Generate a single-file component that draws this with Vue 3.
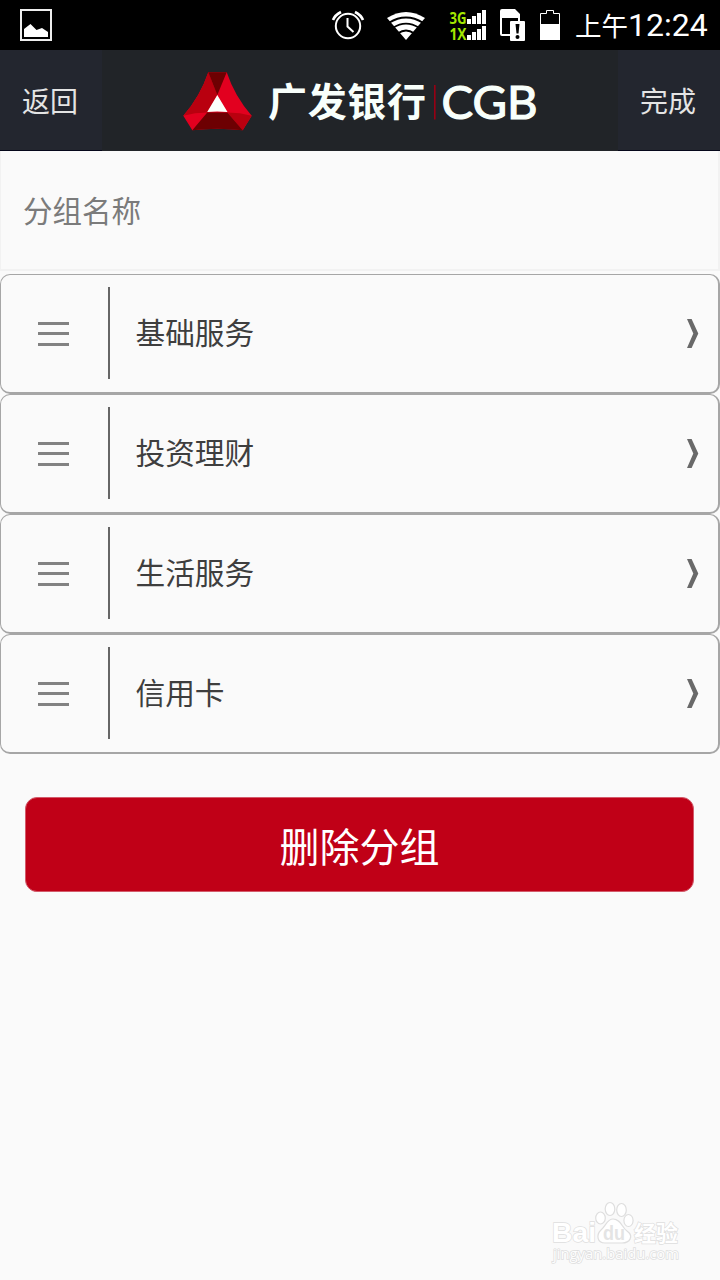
<script setup>
import { ref } from 'vue'

const groups = ref([
  { id: 1, name: '基础服务' },
  { id: 2, name: '投资理财' },
  { id: 3, name: '生活服务' },
  { id: 4, name: '信用卡' },
])

const groupName = ref('')

function removeItem() {
  groupName.value = ''
  groups.value = []
}
</script>

<template>
  <div class="page">
    <div class="status">
      <svg class="pic" width="32" height="32" viewBox="0 0 32 32">
        <rect x="1" y="1" width="30" height="30" fill="none" stroke="#eee" stroke-width="2" />
        <path d="M4 28V20L10.500 15L16.500 21L22 19L28 23V28Z" fill="#fff" />
      </svg>

      <svg class="alarm" width="34" height="32" viewBox="331 9 34 32" fill="none" stroke="#fff">
        <circle cx="348" cy="26" r="12.200" stroke-width="2" />
        <path d="M347.500 18V26.500L353.500 32" stroke-width="2" />
        <path d="M333 20Q335 15 341 12M363 20Q361 15 355 12" stroke-width="2.600" />
      </svg>

      <svg class="wifi" width="38" height="28" viewBox="387 12 38 28">
        <path d="M387 18Q406 6 425 18L406 40Z" fill="#fff" />
        <path
          d="M389 22.800Q406 12.200 423 22.800M393 27.800Q406 19.400 419 27.800M398 33.300Q406 27.700 414 33.300"
          fill="none" stroke="#000" stroke-width="1.900"
        />
      </svg>

      <svg class="signal" width="37" height="32" viewBox="449 10 37 32">
        <g fill="#a4e800" font-family="'Open Sans', sans-serif" font-weight="700" font-size="15.500">
          <text x="449.500" y="24" textLength="17" lengthAdjust="spacingAndGlyphs">3G</text>
          <text x="449.500" y="40" textLength="17" lengthAdjust="spacingAndGlyphs">1X</text>
        </g>
        <path
          d="M467 19h4v5h-4zM472 16h4v8h-4zM477 13h4v11h-4zM482 10h4v14h-4zM467 35h4v5h-4zM472 32h4v8h-4zM477 29h4v11h-4zM482 26h4v14h-4z"
          fill="#fff"
        />
      </svg>

      <svg class="sim" width="25" height="32" viewBox="500 9 25 32">
        <path d="M500 11Q500 9 502 9H515L520 14V21H510V36H502Q500 36 500 34Z" fill="#fff" />
        <path d="M502 18H518V21H510V34H502Z" fill="#000" />
        <rect x="510" y="21" width="15" height="20" rx="1" fill="#fff" />
        <path d="M515.500 24H519.500L518.500 33.500H516.500Z" fill="#000" />
        <circle cx="517.500" cy="37" r="2" fill="#000" />
      </svg>

      <svg class="battery" width="20" height="30" viewBox="540 10 20 30">
        <path d="M540.500 39.500V13.500H546.500V10.500H553.500V13.500H559.500V39.500Z" fill="none" stroke="#fff" />
        <rect x="540" y="24" width="20" height="16" fill="#fff" />
      </svg>

      <div class="time"><span class="noon">上午</span><span>12:24</span></div>
    </div>

    <div class="header">
      <div class="nav back">返回</div>
      <svg class="logo" width="354" height="60" viewBox="183 72 354 60">
        <path d="M208.300 72.300H226.700Q235 97 251.700 115.700L242.700 130.300Q217 127 192.300 130.300L183.300 115.700Q200 97 208.300 72.300Z" fill="#e2001f" />
        <path d="M208.300 72.300L217.300 95L207.300 112.500Q195 112.500 183.300 115.700Q200 97 208.300 72.300Z" fill="#b9000f" />
        <path d="M208.300 72.300H226.700L217.300 95Z" fill="#6d0002" />
        <path d="M227.300 112.500Q240 112.500 251.700 115.700L242.700 130.300Z" fill="#b9000f" />
        <path d="M207.300 112.500H227.300L242.700 130.300Q217 127 192.300 130.300Z" fill="#6d0002" />
        <path d="M217.300 95L227.500 112Q217 111 207.200 112Z" fill="#fafffb" />
        <text class="logo-cn" x="268" y="116" textLength="158">广发银行</text>
        <rect x="434" y="85" width="1.600" height="34.500" fill="#970014" />
        <text class="logo-en" x="441.500" y="118.500" textLength="96" lengthAdjust="spacingAndGlyphs">CGB</text>
      </svg>
      <div class="nav done">完成</div>
    </div>

    <input v-model="groupName" class="name" placeholder="分组名称">

    <div class="list">
      <div v-for="item in groups" :key="item.id" class="row">
        <div class="handle">
          <i></i>
          <i></i>
          <i></i>
        </div>
        <div class="line"></div>
        <div class="text">{{ item.name }}</div>
        <svg class="arrow" width="12" height="30" viewBox="0 0 12 30">
          <path d="M0 0H4.600L11.300 14.500L4.600 29H0L6.300 14.500Z" fill="#696969" />
        </svg>
      </div>
    </div>

    <button class="delete" @click="removeItem">删除分组</button>

    <svg class="mark" width="140" height="66" viewBox="546 1200 140 66">
      <g fill="#fff" stroke="#dedede" stroke-width="1.200">
        <ellipse cx="600.500" cy="1218" rx="4.800" ry="6" />
        <ellipse cx="610" cy="1209" rx="4.800" ry="6.500" />
        <ellipse cx="621.500" cy="1210" rx="4.800" ry="6.500" />
        <ellipse cx="628.500" cy="1220.500" rx="4.600" ry="6" />
        <path d="M613 1219C621 1219 622 1228 627 1231C634 1236 630 1243 622 1243H605C597 1243 596 1235 601 1230C606 1226 607 1219 613 1219Z" />
      </g>
      <g class="mark-text">
        <text x="552" y="1242" font-size="28" font-weight="700" textLength="44" lengthAdjust="spacingAndGlyphs">Bai</text>
        <text class="mark-du" x="603" y="1240" font-size="20" font-weight="700" textLength="22" lengthAdjust="spacingAndGlyphs">du</text>
        <text x="634" y="1240.500" font-size="22" font-weight="700">经验</text>
        <text class="mark-url" x="553" y="1259" font-size="14.500" textLength="126" lengthAdjust="spacingAndGlyphs">jingyan.baidu.com</text>
      </g>
    </svg>
  </div>
</template>

<style>
body {
  margin: 0;
  background: #fafafa;
}
</style>

<style scoped>
.page {
  position: relative;
  width: 720px;
  height: 1280px;
  overflow: hidden;
  background: #fafafa;
  font-family: Roboto, "Noto Sans CJK SC", sans-serif;
}

.status {
  display: flex;
  align-items: flex-start;
  box-sizing: border-box;
  height: 50px;
  padding: 9px 0 0 20px;
  background: #000;
  color: #fff;
}

.status svg {
  flex: none;
}

.alarm {
  margin-left: 279px;
}

.wifi {
  margin: 3px 0 0 22px;
}

.signal {
  margin: 1px 0 0 24px;
  overflow: visible;
}

.sim {
  margin-left: 14px;
}

.battery {
  margin: 1px 0 0 15px;
}

.time {
  display: flex;
  align-items: baseline;
  height: 32px;
  margin-left: 15px;
  font-size: 32px;
  line-height: 32px;
  white-space: nowrap;
}

.noon {
  font-size: 26.500px;
}

.header {
  display: flex;
  justify-content: space-between;
  height: 101px;
  background: #212428;
}

.nav {
  box-sizing: border-box;
  width: 102px;
  height: 101px;
  border-bottom: 1px solid #05071a;
  background: #23262f;
  color: #e4e4e4;
  font-size: 28px;
  line-height: 106px;
}

.back {
  padding-left: 22px;
}

.done {
  padding-left: 22px;
}

.logo {
  flex: none;
  margin: 22px 0 0 -1px;
}

.logo-cn {
  fill: #f8fffb;
  font-family: "Noto Sans CJK SC", sans-serif;
  font-size: 39px;
  font-weight: 700;
}

.logo-en {
  fill: #f8fffb;
  stroke: #f8fffb;
  stroke-width: 1.2px;
  font-family: Lato, sans-serif;
  font-size: 46px;
  font-weight: 400;
}

.name {
  display: block;
  box-sizing: border-box;
  width: 720px;
  height: 120px;
  margin: 0;
  padding: 0 21px 2px 22px;
  border: 2px solid #f2f2f2;
  border-left-width: 1px;
  border-top: 0;
  outline: none;
  border-radius: 0;
  background: #fafafa;
  font-family: "Noto Sans CJK SC", sans-serif;
  font-size: 29.500px;
}

.name::placeholder {
  color: #7b7b7b;
}

.list {
  margin-top: 3px;
}

.row {
  display: flex;
  align-items: center;
  box-sizing: border-box;
  width: 720px;
  height: 120px;
  border: 1px solid #a6a6a6;
  border-right-width: 2px;
  border-bottom-width: 2px;
  border-radius: 10px;
}

.handle {
  display: flex;
  flex-direction: column;
  justify-content: space-between;
  width: 31px;
  height: 24px;
  margin: 0 39px 0 37px;
}

.handle i {
  height: 3px;
  background: #828282;
}

.line {
  width: 1.500px;
  height: 92px;
  margin-bottom: 2px;
  background: #666;
}

.text {
  flex: 1;
  margin: 1px 0 0 26px;
  color: #3e3e3e;
  font-size: 29.700px;
  line-height: 44px;
}

.arrow {
  margin-right: 19px;
}

.delete {
  display: block;
  box-sizing: border-box;
  width: 669px;
  height: 95px;
  margin: 43px 0 0 25px;
  padding: 0;
  border: 1px solid #d35b6b;
  border-radius: 12px;
  background: #c00017;
  color: #fff;
  font-family: "Noto Sans CJK SC", sans-serif;
  font-size: 40px;
}

.mark {
  position: absolute;
  left: 546px;
  top: 1200px;
}

.mark-text {
  fill: #fff;
  stroke: #dedede;
  stroke-width: 1.4px;
  paint-order: stroke;
  font-family: "Liberation Sans", "Noto Sans CJK SC", sans-serif;
}

.mark-du {
  fill: #e4e4e4;
  stroke: none;
}

.mark-url {
  fill: #fdfdfd;
  stroke: #dedede;
  stroke-width: 1.5px;
  font-family: "Open Sans", sans-serif;
}
</style>
